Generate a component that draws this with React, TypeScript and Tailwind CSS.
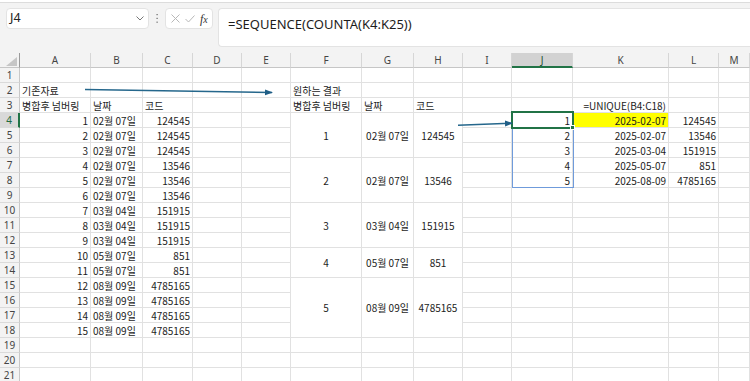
import React from "react";

const COLS = ["A", "B", "C", "D", "E", "F", "G", "H", "I", "J", "K", "L", "M"];

// 원본 데이터 (A4:C18)
const SOURCE = [
  ["1", "02월 07일", "124545"],
  ["2", "02월 07일", "124545"],
  ["3", "02월 07일", "124545"],
  ["4", "02월 07일", "13546"],
  ["5", "02월 07일", "13546"],
  ["6", "02월 07일", "13546"],
  ["7", "03월 04일", "151915"],
  ["8", "03월 04일", "151915"],
  ["9", "03월 04일", "151915"],
  ["10", "05월 07일", "851"],
  ["11", "05월 07일", "851"],
  ["12", "08월 09일", "4785165"],
  ["13", "08월 09일", "4785165"],
  ["14", "08월 09일", "4785165"],
  ["15", "08월 09일", "4785165"],
];

// F:H 병합 셀
const MERGED: Record<number, { span: string; no: string; date: string; code: string }> = {
  4: { span: "row-span-3", no: "1", date: "02월 07일", code: "124545" },
  7: { span: "row-span-3", no: "2", date: "02월 07일", code: "13546" },
  10: { span: "row-span-3", no: "3", date: "03월 04일", code: "151915" },
  13: { span: "row-span-2", no: "4", date: "05월 07일", code: "851" },
  15: { span: "row-span-4", no: "5", date: "08월 09일", code: "4785165" },
};
const COVERED = [5, 6, 8, 9, 11, 12, 14, 16, 17, 18];

const UNIQUE = [
  ["1", "2025-02-07", "124545"],
  ["2", "2025-02-07", "13546"],
  ["3", "2025-03-04", "151915"],
  ["4", "2025-05-07", "851"],
  ["5", "2025-08-09", "4785165"],
];

const ROWS = Array.from({ length: 21 }, (_, i) => i + 1);

function Cell({ children, className = "" }: { children?: React.ReactNode; className?: string }) {
  return (
    <div
      className={`border-r border-b border-[#e1e1e1] px-[2px] leading-[15px] whitespace-nowrap text-[#1c1c1c] ${className}`}
    >
      {children}
    </div>
  );
}

function RowCells({ r }: { r: number }) {
  const src = r >= 4 && r <= 18 ? SOURCE[r - 4] : null;
  const uq = r >= 4 && r <= 8 ? UNIQUE[r - 4] : null;
  const merged = MERGED[r];
  const covered = COVERED.includes(r);
  const selected = r === 4;

  let a: React.ReactNode = null;
  let b: React.ReactNode = null;
  let c: React.ReactNode = null;
  if (r === 2) a = "기존자료";
  if (r === 3) {
    a = "병합후 넘버링";
    b = "날짜";
    c = "코드";
  }

  return (
    <>
      <div
        className={`border-b border-[#dadada] text-center leading-[15px] text-[10px] font-['Noto_Sans'] ${
          selected
            ? "bg-[#d9d9d9] text-[#1e6b3f] border-r-2 border-r-[#217346]"
            : "bg-[#f3f3f3] text-[#444] border-r border-r-[#c8c8c8]"
        }`}
      >
        {r}
      </div>
      <Cell className={src ? "text-right" : ""}>{src ? src[0] : a}</Cell>
      <Cell>{src ? src[1] : b}</Cell>
      <Cell className={src ? "text-right" : ""}>{src ? src[2] : c}</Cell>
      <Cell />
      <Cell />
      {merged ? (
        <>
          <Cell className={`${merged.span} flex items-center justify-center`}>{merged.no}</Cell>
          <Cell className={`${merged.span} flex items-center justify-center`}>{merged.date}</Cell>
          <Cell className={`${merged.span} flex items-center justify-center`}>{merged.code}</Cell>
        </>
      ) : covered ? null : (
        <>
          <Cell>{r === 2 ? "원하는 결과" : r === 3 ? "병합후 넘버링" : null}</Cell>
          <Cell>{r === 3 ? "날짜" : null}</Cell>
          <Cell>{r === 3 ? "코드" : null}</Cell>
        </>
      )}
      <Cell />
      <Cell className="text-right">{uq ? uq[0] : null}</Cell>
      <Cell className={`text-right ${r === 4 ? "bg-[#ffff00]" : ""}`}>
        {uq ? uq[1] : r === 3 ? "=UNIQUE(B4:C18)" : null}
      </Cell>
      <Cell className="text-right">{uq ? uq[2] : null}</Cell>
      <Cell />
    </>
  );
}

function FormulaBar() {
  return (
    <div className="h-[53px] bg-[#f3f3f3]">
      <div className="h-[3px] bg-white border-b border-[#dcdcdc]" />
      <div className="flex items-start pt-[5px] pl-[6px] font-['Noto_Sans']">
        <div className="w-[143px] h-[21px] bg-white rounded-[4px] border border-[#e3e3e3] flex items-center justify-between pl-[3px] pr-[4px]">
          <span className="text-[12.5px] text-[#222]">J4</span>
          <svg width="8" height="5" viewBox="0 0 8 5">
            <polyline points="0.5,0.5 4,4 7.5,0.5" fill="none" stroke="#777" strokeWidth="1" />
          </svg>
        </div>
        <div className="w-[16px] h-[21px] flex items-center justify-center">
          <svg width="2" height="9" viewBox="0 0 2 9">
            <rect x="0.5" y="0" width="1.2" height="1.2" fill="#666" />
            <rect x="0.5" y="3.8" width="1.2" height="1.2" fill="#666" />
            <rect x="0.5" y="7.6" width="1.2" height="1.2" fill="#666" />
          </svg>
        </div>
        <div className="w-[48px] h-[21px] bg-white rounded-[4px] border border-[#e3e3e3] flex items-center gap-[5px] pl-[5px]">
          <svg width="9" height="9" viewBox="0 0 9 9">
            <path d="M0.5 0.5 L8.5 8.5 M8.5 0.5 L0.5 8.5" stroke="#b8b8b8" strokeWidth="1" />
          </svg>
          <svg width="10" height="8" viewBox="0 0 10 8">
            <path d="M0.5 4 L3.5 7 L9.5 0.5" fill="none" stroke="#b8b8b8" strokeWidth="1" />
          </svg>
          <span className="font-['Liberation_Serif'] italic text-[12px] text-[#333] leading-none">
            f<span className="text-[10px]">x</span>
          </span>
        </div>
        <div className="ml-[5px] flex-1 h-[39px] bg-white rounded-l-[4px] border border-r-0 border-[#e3e3e3] pl-[9px] pt-[2px]">
          <span className="text-[13px] text-[#1c1c1c] leading-[20px]">=SEQUENCE(COUNTA(K4:K25))</span>
        </div>
      </div>
    </div>
  );
}

export default function App() {
  return (
    <div className="relative w-[750px] h-[381px] overflow-hidden bg-white">
      <FormulaBar />
      <div className="grid grid-cols-[20px_71px_52px_50px_49px_49px_71px_52px_49px_49px_61px_96px_50px_1fr] auto-rows-[15px] text-[10px] font-['Noto_Sans_CJK_KR',sans-serif]">
        <div className="bg-[#f3f3f3] border-b border-[#c6c6c6] border-r border-r-[#9a9a9a] flex items-end justify-end pr-[2px] pb-[1px]">
          <svg width="11" height="9" viewBox="0 0 11 9">
            <polygon points="11,0 11,9 0,9" fill="#c6c6c6" />
          </svg>
        </div>
        {COLS.map((l) => (
          <div
            key={l}
            className={`text-center leading-[15px] font-['Noto_Sans'] text-[10px] border-r border-[#d6d6d6] ${
              l === "J"
                ? "bg-[#d2d2d2] text-[#1e4f30] border-b-2 border-b-[#217346]"
                : "bg-[#f3f3f3] text-[#444] border-b border-b-[#c6c6c6]"
            }`}
          >
            {l}
          </div>
        ))}
        {ROWS.map((r) => (
          <RowCells key={r} r={r} />
        ))}
      </div>

      {/* 스필 범위 / 선택 셀 */}
      <div className="absolute left-[512px] top-[112px] w-[62px] h-[76px] border border-[#6f9bdb] pointer-events-none" />
      <div className="absolute left-[511px] top-[111px] w-[63px] h-[18px] border-2 border-[#217346] pointer-events-none" />
      <div className="absolute left-[570px] top-[125px] w-[5px] h-[5px] bg-[#217346] border border-white pointer-events-none" />

      {/* 화살표 */}
      <svg className="absolute left-0 top-0 pointer-events-none" width="750" height="381">
        <defs>
          <marker id="ah" markerWidth="8" markerHeight="8" refX="7" refY="4" orient="auto" markerUnits="userSpaceOnUse">
            <polygon points="0,1 8,4 0,7" fill="#1f5e86" />
          </marker>
        </defs>
        <line x1="85" y1="89.5" x2="272" y2="92.5" stroke="#25678c" strokeWidth="1.5" markerEnd="url(#ah)" />
        <line x1="458" y1="125.3" x2="512" y2="123.3" stroke="#25678c" strokeWidth="1.5" markerEnd="url(#ah)" />
      </svg>
    </div>
  );
}
